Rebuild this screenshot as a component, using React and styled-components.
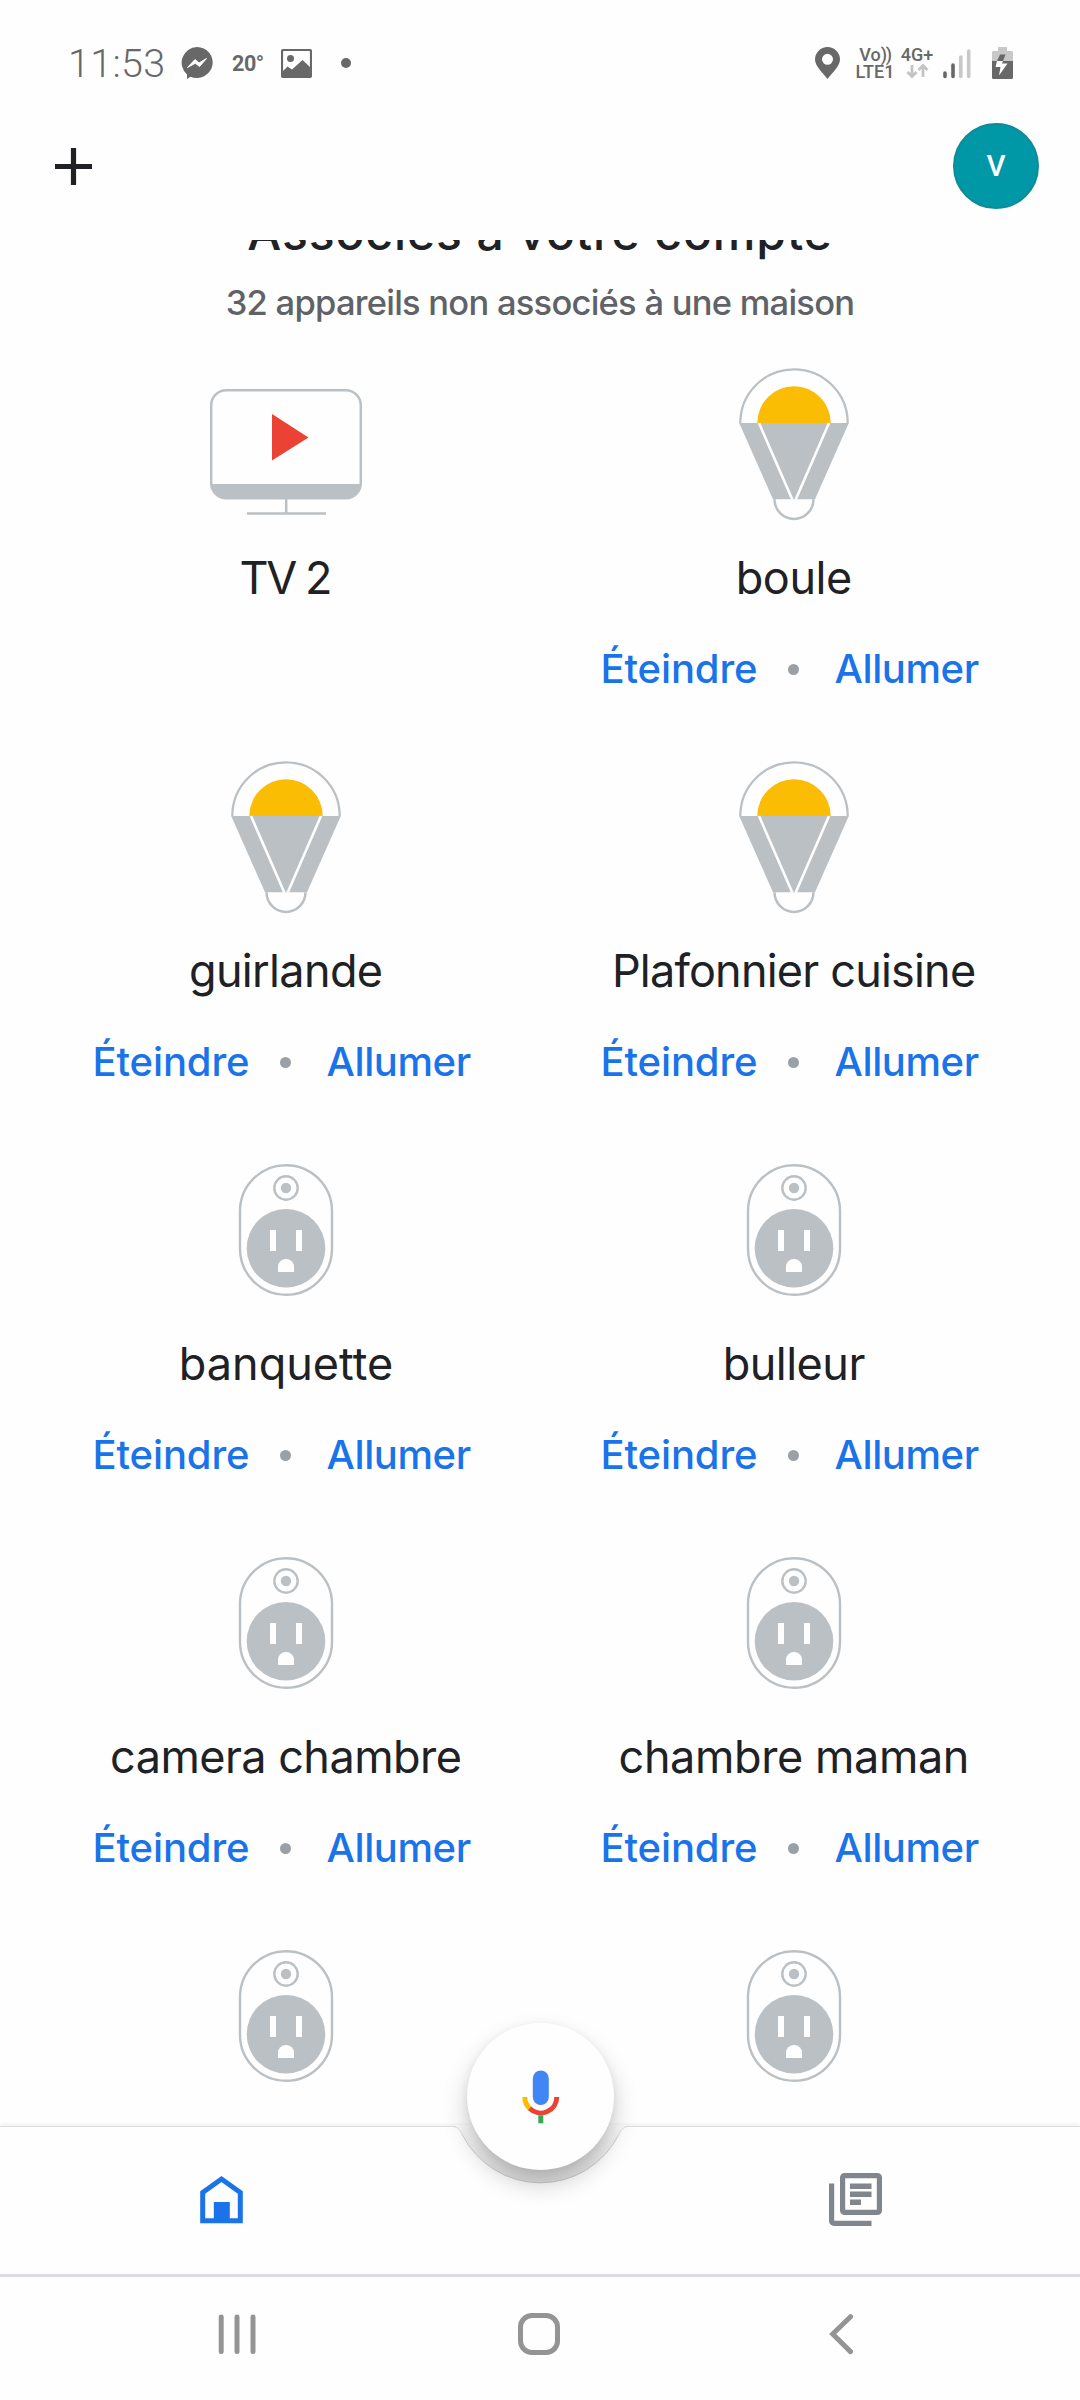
import React from "react";
import styled, { createGlobalStyle } from "styled-components";

const GlobalStyle = createGlobalStyle`
  * { box-sizing: border-box; }
  body { margin: 0; background: #fefefe; }
`;

const sans = `Inter, "Open Sans", sans-serif`;
const line = "#bbc0c4";

const Screen = styled.div`
  width: 1080px;
  height: 2400px;
  display: flex;
  flex-direction: column;
  overflow: hidden;
  background: #fefefe;
  font-family: ${sans};
  color: #202124;
`;

const StatusBar = styled.div`
  height: 94px;
  flex: none;
  padding: 31px 67px 0 68px;
  display: flex;
  justify-content: space-between;
  font-family: Roboto, sans-serif;
  color: #686868;
`;

const StatusGroup = styled.div`
  display: flex;
  align-items: center;
  height: 64px;
`;

const Clock = styled.div`
  width: 113px;
  font-size: 39.5px;
  font-weight: 300;
  letter-spacing: 0.3px;
  line-height: 64px;
  padding-top: 2px;
  white-space: nowrap;
`;

const Temperature = styled.div`
  width: 49px;
  margin-left: 19px;
  font-size: 21.5px;
  font-weight: 700;
  line-height: 64px;
  padding-top: 1px;
  letter-spacing: -0.4px;
`;

const Dot = styled.span`
  display: block;
  width: ${(p) => p.$size}px;
  height: ${(p) => p.$size}px;
  border-radius: 50%;
  background: ${(p) => p.$color};
`;

const StatusDot = styled(Dot)`
  margin-left: 29px;
`;

const TinyStack = styled.div`
  display: flex;
  flex-direction: column;
  align-items: center;
  width: ${(p) => p.$width}px;
  margin-left: ${(p) => p.$left}px;
  margin-right: ${(p) => p.$right || 0}px;
  font-size: 18px;
  font-weight: 500;
  line-height: 17px;
  white-space: nowrap;
`;

const Waves = styled.span`
  letter-spacing: -1.2px;
`;

const Header = styled.header`
  height: 145px;
  flex: none;
  padding: 29px 41px 0 55px;
  display: flex;
  align-items: flex-start;
  justify-content: space-between;
`;

const AddButton = styled.div`
  margin-top: 25px;
  height: 37px;
`;

const Avatar = styled.div`
  width: 86px;
  height: 86px;
  border-radius: 50%;
  background: #0097a7;
  border: 2px solid #108a97;
  color: #fefefe;
  font-family: Roboto, sans-serif;
  font-size: 29.5px;
  font-weight: 500;
  line-height: 83px;
  text-align: center;
`;

const Content = styled.main`
  flex: 1;
  min-height: 0;
  margin-top: 1px;
  overflow: hidden;
  display: flex;
  flex-direction: column;
`;

const Title = styled.h1`
  flex: none;
  margin: -35px 0 0;
  font-size: 48px;
  font-weight: 500;
  line-height: 56px;
  letter-spacing: ${(p) => p.$spacing}px;
  text-align: center;
  white-space: nowrap;
`;

const Subtitle = styled.p`
  flex: none;
  margin: 20px 0 39px;
  font-size: 34.5px;
  font-weight: 500;
  line-height: 44px;
  letter-spacing: ${(p) => p.$spacing}px;
  text-align: center;
  color: #5f6368;
  white-space: nowrap;
`;

const DeviceGrid = styled.div`
  flex: none;
  padding: 0 32px;
  display: grid;
  grid-template-columns: 508px 508px;
  grid-auto-rows: 393px;
`;

const DeviceCard = styled.section`
  display: flex;
  flex-direction: column;
  align-items: center;
`;

const DeviceIcon = styled.svg`
  display: block;
  width: 160px;
  height: 160px;
`;

const DeviceName = styled.div`
  margin-top: 26px;
  font-size: 45px;
  line-height: 56px;
  letter-spacing: ${(p) => p.$spacing}px;
  margin-right: ${(p) => -p.$spacing}px;
  white-space: nowrap;
`;

const Actions = styled.div`
  margin-top: 39px;
  width: 100%;
  height: 48px;
  padding-right: 2px;
  display: grid;
  grid-template-columns: 1fr 11px 1fr;
  align-items: center;
`;

const Action = styled.span`
  font-size: 40px;
  font-weight: 500;
  line-height: 48px;
  color: #1a73e8;
  letter-spacing: ${(p) => p.$spacing}px;
  text-align: ${(p) => p.$align};
  padding: 0 ${(p) => (p.$align === "right" ? 30 : 0)}px 0 ${(p) => (p.$align === "left" ? 36 : 0)}px;
  white-space: nowrap;
`;

const BottomBar = styled.nav`
  position: relative;
  flex: none;
  height: 148px;
  border-top: 1px solid #dedede;
  box-shadow: 0 -2px 3px rgba(0, 0, 0, 0.05);
  background: #fefefe;
  display: flex;
  justify-content: space-between;
  padding: 46px 197px 0 199px;
`;

const Notch = styled.svg`
  position: absolute;
  left: 440px;
  top: -7px;
`;

const HomeGlyph = styled.svg`
  margin-top: 2px;
`;

const MicButton = styled.div`
  position: absolute;
  left: 467px;
  top: -104px;
  width: 147px;
  height: 147px;
  border-radius: 50%;
  background: #fefefe;
  box-shadow: 0 13px 24px rgba(0, 0, 0, 0.21), 0 2px 8px rgba(0, 0, 0, 0.06);
  display: flex;
  justify-content: center;
  padding-top: 46px;
`;

const SystemBar = styled.div`
  flex: none;
  height: 126px;
  border-top: 3px solid #dadce0;
  padding: 36px 227px 0 218px;
  display: flex;
  justify-content: space-between;
`;

const HomeKey = styled.svg`
  margin-right: 7px;
`;

function TvIcon() {
  return (
    <DeviceIcon viewBox="206 364 160 160">
      <path d="M211.5 484h149.500a16 14 0 0 1-15 14h-119.500a16 14 0 0 1-15-14z" fill={line} />
      <rect x="211.2" y="390.2" width="149.6" height="108" rx="15" fill="none" stroke={line} strokeWidth="2.500" />
      <path d="M286.200 499v14.500M247 513.500h79" stroke={line} strokeWidth="2.500" fill="none" />
      <path d="M272 414v46.500l36.500-23z" fill="#ea4335" />
    </DeviceIcon>
  );
}

function BulbIcon() {
  return (
    <DeviceIcon viewBox="714 364 160 160">
      <path d="M740.300 423a53.700 53.700 0 0 1 107.400 0" fill="none" stroke={line} strokeWidth="2.300" />
      <path d="M739.200 423h109.600L815 499.300h-42z" fill={line} />
      <path d="M757.300 423a36.700 36.700 0 0 1 73.400 0z" fill="#fbbc04" />
      <path d="M759 423l33.300 76.500M829 423l-33.300 76.500" stroke="#fefefe" strokeWidth="2.600" />
      <path d="M774.500 499.300a19.500 19.700 0 0 0 39 0" fill="none" stroke={line} strokeWidth="2.500" />
    </DeviceIcon>
  );
}

function PlugIcon() {
  return (
    <DeviceIcon viewBox="206 1150 160 160">
      <rect x="240" y="1165.200" width="92" height="129.600" rx="46" fill="none" stroke={line} strokeWidth="2.400" />
      <circle cx="286" cy="1188" r="11.700" fill="none" stroke={line} strokeWidth="2.400" />
      <circle cx="286" cy="1188" r="5.200" fill={line} />
      <circle cx="286" cy="1248.300" r="39.300" fill={line} />
      <path d="M270 1230h6v21h-6zM296 1230h6v21h-6z" fill="#fefefe" />
      <path d="M278 1272v-5.500a8 7.500 0 0 1 16 0v5.500z" fill="#fefefe" />
    </DeviceIcon>
  );
}

const icons = { tv: TvIcon, bulb: BulbIcon, plug: PlugIcon };

const devices = [
  { name: "TV 2", kind: "tv", spacing: -2.4 },
  { name: "boule", kind: "bulb", spacing: -0.4, actions: true },
  { name: "guirlande", kind: "bulb", spacing: -0.65, actions: true },
  { name: "Plafonnier cuisine", kind: "bulb", spacing: -0.8, actions: true },
  { name: "banquette", kind: "plug", spacing: 0, actions: true },
  { name: "bulleur", kind: "plug", spacing: -0.5, actions: true },
  { name: "camera chambre", kind: "plug", spacing: -0.55, actions: true },
  { name: "chambre maman", kind: "plug", spacing: -0.4, actions: true },
  { kind: "plug" },
  { kind: "plug" },
];

function Device({ device }) {
  const Icon = icons[device.kind];
  return (
    <DeviceCard>
      <Icon />
      {device.name && <DeviceName $spacing={device.spacing}>{device.name}</DeviceName>}
      {device.actions && (
        <Actions>
          <Action $align="right" $spacing={-0.1}>Éteindre</Action>
          <Dot $size={11} $color="#9aa0a6" />
          <Action $align="left" $spacing={-0.4}>Allumer</Action>
        </Actions>
      )}
    </DeviceCard>
  );
}

function Status() {
  return (
    <StatusBar>
      <StatusGroup>
        <Clock>11:53</Clock>
        <svg width="32" height="32" viewBox="0 0 32 32">
          <path d="M16 0a16 15.500 0 1 1-6.500 29.800L6 32v-4.500A15.700 15.700 0 0 1 16 0z" fill="#686868" />
          <path d="M6.500 20.500l7.500-8 4 3.500 7.500-4.500-7 8-4.200-3.300z" fill="#fefefe" stroke="#fefefe" />
        </svg>
        <Temperature>20°</Temperature>
        <svg width="31" height="29" viewBox="0 0 31 29">
          <rect x="1" y="1" width="29" height="27" rx="1.500" fill="none" stroke="#686868" strokeWidth="2.200" />
          <circle cx="9.500" cy="9.500" r="3.500" fill="#686868" />
          <path d="M2 22l4.500-4.500 4.500 3L21.500 11l8 7.500V28H2z" fill="#686868" />
        </svg>
        <StatusDot $size={10} $color="#686868" />
      </StatusGroup>
      <StatusGroup>
        <svg width="25" height="32" viewBox="0 0 25 32">
          <path fillRule="evenodd" d="M12.500 0A12.500 12.500 0 0 1 25 12.500C25 19 17 26 12.500 32 8 26 0 19 0 12.500A12.500 12.500 0 0 1 12.500 0zm0 6.800a5.500 5.500 0 1 0 0 11 5.500 5.500 0 0 0 0-11z" fill="#686868" />
        </svg>
        <TinyStack $width={40} $left={15}>
          <span>Vo<Waves>))</Waves></span>
          <span>LTE1</span>
        </TinyStack>
        <TinyStack $width={32} $left={6} $right={10}>
          <span>4G+</span>
          <svg width="23" height="17" viewBox="0 0 23 17">
            <path d="M6 2v11M1.500 9L6 13.500 10.500 9M17 14V3M12.500 7L17 2.500 21.500 7" stroke="#c4c4c4" strokeWidth="2.800" fill="none" />
          </svg>
        </TinyStack>
        <svg width="70" height="32" viewBox="943 47 70 32">
          <path d="M945 73v3.500M953 65v11.500" stroke="#686868" strokeWidth="3.600" strokeLinecap="round" />
          <path d="M960.800 57v19.500M968.700 51v25.500" stroke="#c8c8c8" strokeWidth="3.600" strokeLinecap="round" />
          <path d="M998 47h9v4h4.500a1.500 1.500 0 0 1 1.500 1.500V62h-21v-9.500a1.500 1.500 0 0 1 1.500-1.500h4.500z" fill="#c8c8c8" />
          <path d="M992 61h21v16.500a1.500 1.500 0 0 1-1.500 1.500h-18a1.500 1.500 0 0 1-1.500-1.500z" fill="#686868" />
          <path d="M1000 54.500h5.500l-2.500 6.500h-6z" fill="#686868" />
          <path d="M997 61h6l-1 2.500h5.500l-8.500 12 1.500-8.500h-5z" fill="#fefefe" />
        </svg>
      </StatusGroup>
    </StatusBar>
  );
}

function Navigation() {
  return (
    <BottomBar>
      <Notch width="201" height="80" viewBox="440 2120 201 80">
        <defs>
          <linearGradient id="notch" x1="0" y1="2126" x2="0" y2="2184" gradientUnits="userSpaceOnUse">
            <stop offset="0" stopColor="#fafafa" />
            <stop offset="1" stopColor="#dedede" />
          </linearGradient>
          <linearGradient id="rim" x1="0" y1="2126" x2="0" y2="2184" gradientUnits="userSpaceOnUse">
            <stop offset="0" stopColor="#e0e0e0" />
            <stop offset="0.300" stopColor="#cecece" />
            <stop offset="1" stopColor="#cacaca" />
          </linearGradient>
        </defs>
        <path d="M453 2125C457 2126.500 459.500 2129 462 2134A87.500 87.500 0 0 0 619 2134C621.500 2129 624 2126.500 628 2125z" fill="url(#notch)" />
        <path d="M452 2126.500C457 2126.500 459.500 2129 462 2134A87.500 87.500 0 0 0 619 2134C621.500 2129 624 2126.500 629 2126.500" fill="none" stroke="url(#rim)" />
      </Notch>
      <HomeGlyph width="45" height="50" viewBox="199 2175 45 50">
        <path d="M202.700 2220.800v-28.300l18.800-13.500 18.800 13.500v28.300z" fill="none" stroke="#1a73e8" strokeWidth="5" />
        <path d="M213.800 2202h16v18h-16z" fill="#1a73e8" />
      </HomeGlyph>
      <MicButton>
        <svg width="40" height="56" viewBox="0.700 0 40 56">
          <rect x="12.500" y="1.500" width="16" height="34.500" rx="8" fill="#4285f4" />
          <path d="M4.500 28a16 16 0 0 0 4.700 11.300" fill="none" stroke="#fbbc04" strokeWidth="5" />
          <path d="M9.200 39.300A16 16 0 0 0 36.500 28" fill="none" stroke="#ea4335" strokeWidth="5" />
          <path d="M20.500 46.300v8" stroke="#34a853" strokeWidth="5" />
        </svg>
      </MicButton>
      <svg width="54" height="54" viewBox="829 2173 54 54">
        <rect x="842.600" y="2175.600" width="36.800" height="36.800" rx="2" fill="none" stroke="#80868b" strokeWidth="5.200" />
        <path d="M850 2183.500h21.500v5.500H850zM850 2191.500h21.500v5.500H850zM850 2199.500h11v5.500h-11z" fill="#80868b" />
        <path d="M831.600 2183.500v37.500a2.400 2.400 0 0 0 2.400 2.400h37.500" fill="none" stroke="#80868b" strokeWidth="5.200" />
      </svg>
    </BottomBar>
  );
}

function SystemNavigation() {
  const stroke = { fill: "none", stroke: "#949494", strokeWidth: 5, strokeLinecap: "round" };
  return (
    <SystemBar>
      <svg width="38" height="42" viewBox="218 2313 38 42">
        <path d="M221.200 2317v34.500M237 2317v34.500M253 2317v34.500" {...stroke} />
      </svg>
      <HomeKey width="42" height="42" viewBox="0 0 42 42">
        <rect x="2.500" y="2.500" width="37" height="37" rx="11.500" {...stroke} />
      </HomeKey>
      <svg width="24" height="42" viewBox="829 2313 24 42">
        <path d="M850.500 2316.700l-17.800 17.300 17.800 17.600" {...stroke} />
      </svg>
    </SystemBar>
  );
}

export default function App() {
  return (
    <Screen>
      <GlobalStyle />
      <Status />
      <Header>
        <AddButton>
          <svg width="37" height="37" viewBox="0 0 37 37">
            <path d="M18.500 0v37M0 18.500h37" stroke="#202124" strokeWidth="5.200" />
          </svg>
        </AddButton>
        <Avatar>V</Avatar>
      </Header>
      <Content>
        <Title $spacing={0.9}>Associés à votre compte</Title>
        <Subtitle $spacing={-0.75}>32 appareils non associés à une maison</Subtitle>
        <DeviceGrid>
          {devices.map((device, i) => (
            <Device key={i} device={device} />
          ))}
        </DeviceGrid>
      </Content>
      <Navigation />
      <SystemNavigation />
    </Screen>
  );
}
